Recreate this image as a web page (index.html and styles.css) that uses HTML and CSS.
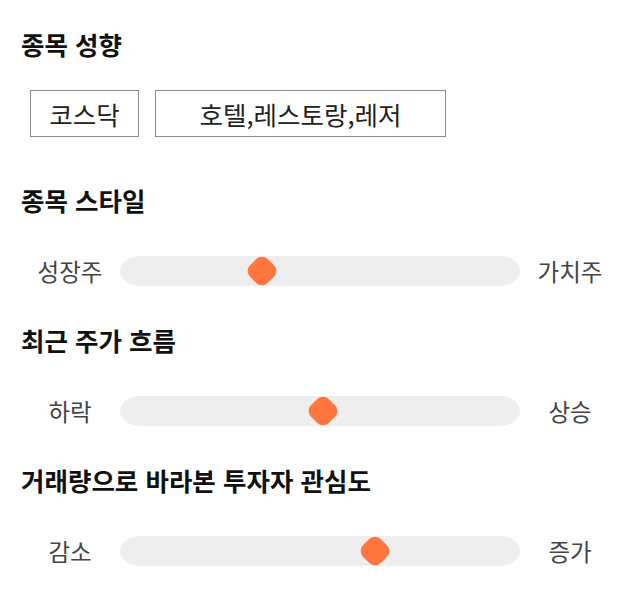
FILE: index.html
```html
<!DOCTYPE html>
<html lang="ko">
<head>
<meta charset="utf-8">
<link rel="stylesheet" href="styles.css">
</head>
<body>
<main class="panel">
  <section class="group">
    <h2 class="title">종목 성향</h2>
    <div class="tags">
      <span class="tag tag-short">코스닥</span>
      <span class="tag tag-long">호텔,레스토랑,레저</span>
    </div>
  </section>
  <section class="group">
    <h2 class="title">종목 스타일</h2>
    <div class="slider">
      <span class="label">성장주</span>
      <div class="track"><span class="thumb" style="left:142px"></span></div>
      <span class="label">가치주</span>
    </div>
  </section>
  <section class="group">
    <h2 class="title">최근 주가 흐름</h2>
    <div class="slider">
      <span class="label">하락</span>
      <div class="track"><span class="thumb" style="left:203px"></span></div>
      <span class="label">상승</span>
    </div>
  </section>
  <section class="group">
    <h2 class="title">거래량으로 바라본 투자자 관심도</h2>
    <div class="slider">
      <span class="label">감소</span>
      <div class="track"><span class="thumb" style="left:255px"></span></div>
      <span class="label">증가</span>
    </div>
  </section>
</main>
</body>
</html>
```
FILE: styles.css
```css
* { box-sizing: border-box; }
html, body { margin: 0; padding: 0; background: #fff; }
body {
  font-family: "Noto Sans CJK KR", "Noto Sans", sans-serif;
  color: #111;
}
.panel {
  display: flex;
  flex-direction: column;
  padding: 27px 20px 0 20px;
}
.group {
  display: flex;
  flex-direction: column;
}
.title {
  margin: 0 0 0 1px;
  font-size: 25.5px;
  font-weight: 700;
  line-height: 34px;
  color: #111;
}
.tags {
  display: flex;
  gap: 16px;
  margin: 29px 0 46px 10px;
}
.tag {
  display: flex;
  align-items: center;
  justify-content: center;
  height: 47px;
  border: 1px solid #8a8a8a;
  font-size: 25.5px;
  color: #222;
}
.tag-short { width: 109px; }
.tag-long { width: 291px; }
.slider {
  display: flex;
  align-items: center;
  height: 30px;
  margin: 39px 0 37px 0;
}
.label {
  width: 100px;
  text-align: center;
  font-size: 23.5px;
  color: #444;
}
.track {
  position: relative;
  width: 400px;
  height: 30px;
  background: #eeeeee;
  border-radius: 20px / 15px;
}
.thumb {
  position: absolute;
  top: 50%;
  width: 25px;
  height: 25px;
  background: #ff763f;
  border-radius: 8px;
  transform: translate(-50%, -50%) rotate(45deg);
}
```
